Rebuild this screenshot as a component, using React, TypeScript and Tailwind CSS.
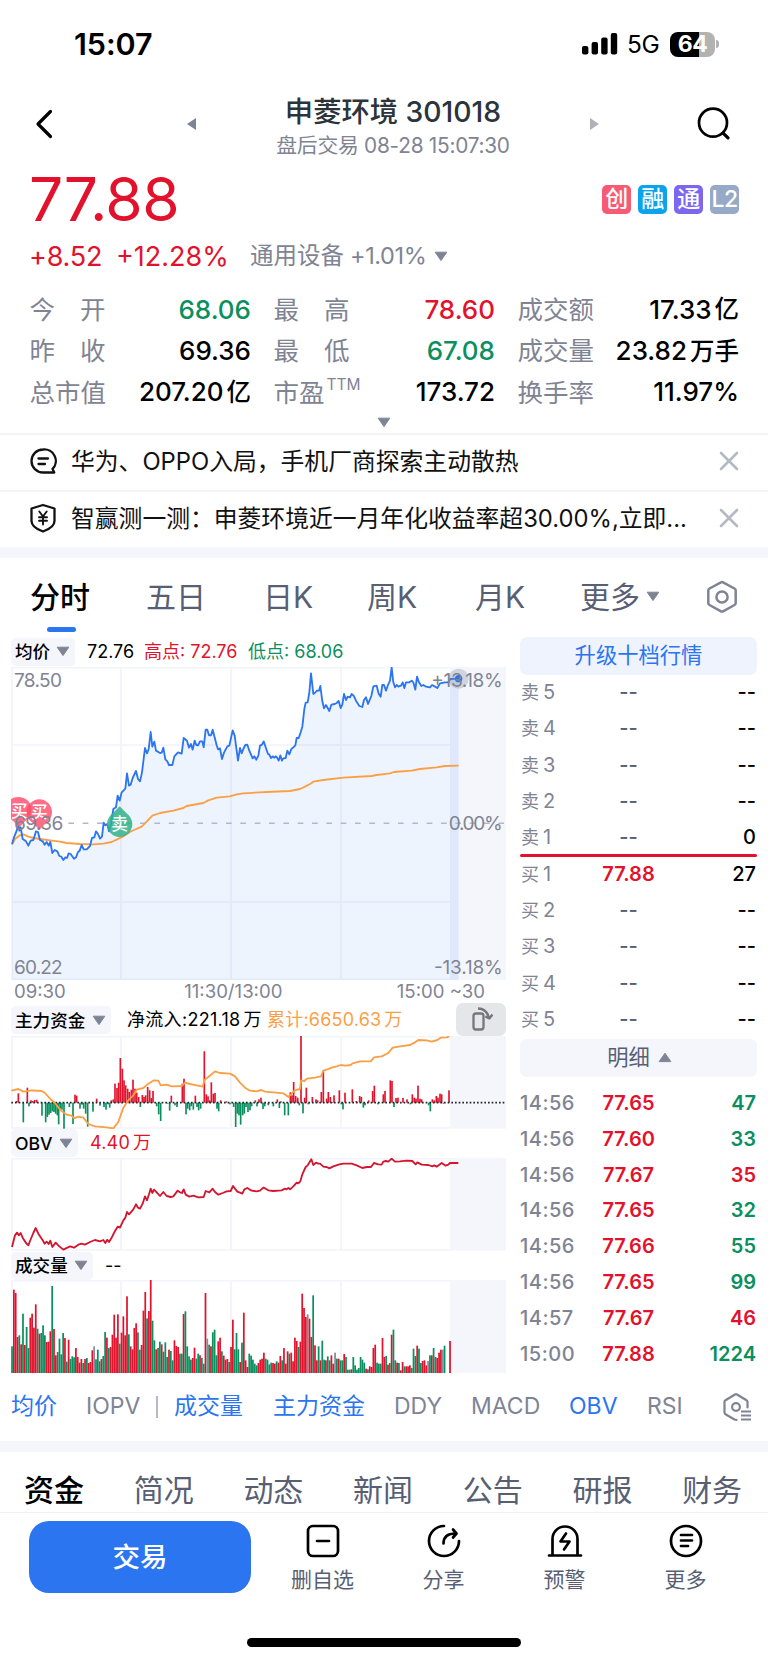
import React from "react";

const RED = "#e2122c";
const GREEN = "#0a8f5f";
const GREY = "#7f8494";

type Point = [number, number];

const parse = (s: string): Point[] =>
  s.trim().split(/\s+/).map((p) => p.split(",").map(Number) as Point);

const PRICE = "36,640 42,620 50,600 55,585 58,600 62,590 68,625 78,632 85,645 92,630 100,628 108,602 114,604 120,628 128,632 134,642 140,634 146,645 151,634 157,667 164,658 172,662 178,676 184,678 190,688 196,680 201,682 206,668 212,670 222,684 228,680 234,664 239,660 245,643 251,656 260,656 270,646 276,622 283,620 288,602 294,610 300,624 306,618 311,576 316,584 322,580 327,602 333,580 340,535 348,530 353,495 359,510 365,485 376,474 381,428 387,465 392,462 398,442 408,421 414,445 420,452 426,425 435,352 441,368 446,355 452,304 457,348 463,333 468,360 480,367 485,366 490,351 496,386 502,392 507,403 517,403 523,377 534,365 545,369 551,322 561,330 567,351 573,340 578,357 584,330 589,343 594,344 600,332 607,332 611,350 617,297 622,297 627,314 633,314 638,297 650,344 654,356 660,353 666,385 672,366 682,347 688,345 698,299 704,315 714,390 720,352 725,368 730,355 736,343 742,342 748,360 758,383 763,377 769,387 775,375 780,345 786,342 791,332 797,350 804,370 808,372 813,382 818,377 823,381 828,377 832,382 836,390 841,374 846,390 850,383 857,382 862,360 868,371 874,355 880,350 886,344 890,322 896,322 902,305 907,288 913,235 917,216 923,215 928,185 933,128 940,190 946,185 951,180 957,180 961,166 967,212 972,233 978,223 988,241 994,222 1004,220 1010,217 1016,211 1022,232 1027,222 1032,190 1038,208 1043,198 1050,200 1055,190 1061,195 1068,210 1078,226 1087,229 1092,208 1098,200 1104,220 1114,196 1120,167 1130,165 1136,189 1142,198 1147,163 1152,163 1158,180 1163,165 1170,150 1175,111 1180,155 1185,170 1190,163 1195,168 1203,165 1208,155 1213,172 1218,155 1228,155 1235,150 1240,155 1246,177 1251,138 1257,155 1264,166 1270,163 1278,168 1290,170 1296,163 1305,168 1312,172 1320,158 1335,155 1345,155 1351,145 1370,144 1376,144";

const AVERAGE = "36,642 45,625 58,615 70,611 85,618 100,622 120,625 150,629 180,633 200,637 240,640 280,641 310,639 335,634 350,627 370,617 395,601 425,588 440,573 457,555 480,547 520,540 550,532 560,526 610,517 625,509 650,501 690,497 710,491 730,488 780,485 800,484 870,481 900,475 915,468 930,460 940,453 970,448 1030,441 1115,436 1130,433 1170,428 1182,424 1235,420 1260,415 1310,410 1335,406 1376,405";

const FUND_LINE = "34,271 55,266 70,274 95,270 125,272 135,278 155,300 165,308 180,328 200,343 215,346 222,354 235,349 250,352 265,371 285,378 320,381 340,384 355,365 370,322 385,300 400,285 410,268 430,263 445,250 462,240 475,241 482,255 500,253 515,258 545,257 555,247 570,251 590,255 608,259 614,238 625,230 645,213 660,218 690,220 705,228 720,247 735,262 750,271 770,273 783,269 795,274 820,276 850,279 865,290 873,282 884,270 900,266 903,240 913,242 921,235 945,232 963,228 970,211 982,207 995,202 1010,198 1022,194 1035,196 1052,194 1058,189 1080,183 1112,183 1122,171 1145,168 1165,158 1178,142 1200,138 1230,134 1245,126 1255,119 1280,120 1295,124 1312,119 1322,112 1340,111 1348,108";

const FUND_BARS = "50,302 55,279 70,366 82,262 87,318 93,300 98,302 104,299 110,298 126,346 137,366 142,350 147,343 152,338 157,333 162,335 167,340 172,345 176,372 181,325 186,328 192,385 208,320 219,371 225,283 230,286 240,325 246,313 251,325 257,340 263,379 279,334 290,295 300,316 312,320 318,328 324,312 329,322 334,300 340,297 345,250 351,263 356,247 361,173 367,205 372,240 377,255 383,265 388,275 394,268 399,238 405,265 410,277 416,290 421,320 427,284 432,290 437,285 443,260 449,270 454,293 459,272 470,318 476,342 482,362 503,310 509,331 514,286 525,315 531,320 547,250 552,235 558,342 563,325 569,330 574,318 580,328 586,286 591,320 596,330 602,325 613,153 619,282 624,288 629,300 634,246 640,280 645,278 651,325 656,333 662,300 679,303 690,312 701,320 707,380 712,340 717,345 722,373 728,345 733,340 738,320 744,335 750,330 755,318 766,300 771,318 777,297 783,292 789,326 794,318 805,315 820,318 832,297 838,323 843,303 854,345 865,345 871,276 876,285 881,245 887,287 893,292 898,315 903,107 909,339 914,292 919,262 925,312 937,290 948,297 953,300 964,275 970,211 980,295 985,275 991,290 997,305 1002,285 1018,270 1024,312 1029,327 1035,277 1057,267 1069,302 1079,287 1084,290 1090,322 1095,315 1106,300 1118,272 1123,256 1134,312 1150,282 1155,272 1171,240 1176,242 1182,320 1188,293 1194,292 1209,293 1221,297 1231,312 1237,282 1243,292 1248,295 1254,256 1260,295 1265,297 1286,315 1291,333 1297,297 1303,300 1309,287 1314,292 1320,280 1325,282 1330,310 1347,270";

const OBV = "36,740 45,705 51,697 57,705 62,698 68,712 78,728 85,735 90,722 100,698 107,683 115,700 128,720 134,730 140,724 146,731 151,721 157,740 167,727 178,738 190,748 210,738 222,742 235,733 245,730 255,733 270,725 285,719 300,723 310,719 316,728 322,718 327,725 335,712 345,692 353,679 360,682 370,660 376,652 381,635 387,642 400,627 408,612 414,622 420,625 428,610 435,588 441,600 447,582 452,565 457,578 462,568 470,576 480,587 490,575 500,587 512,590 520,588 533,571 540,576 546,578 551,567 557,583 568,589 580,586 595,591 611,590 617,572 628,576 638,565 645,575 655,583 668,578 680,573 692,572 699,557 712,574 720,577 727,580 733,567 742,563 755,571 770,573 780,571 790,562 797,565 805,570 820,572 845,570 855,565 860,567 865,563 870,567 880,558 890,547 895,549 901,543 907,522 917,500 923,495 934,477 940,494 948,487 955,490 960,490 970,499 980,500 988,504 1000,498 1018,492 1030,490 1055,490 1070,495 1087,503 1100,500 1113,500 1122,488 1135,492 1145,493 1150,484 1158,482 1165,484 1175,475 1185,484 1200,483 1220,481 1237,482 1247,492 1252,486 1265,493 1285,494 1297,498 1303,495 1310,499 1325,488 1337,496 1345,493 1350,488 1375,488";

const VOLUME = "g1038 r868 r878 r1010 g1005 r1032 g940 r1034 g980 g1043 r952 r940 r982 r912 g985 r1000 g998 g975 g1005 r1025 r1024 r993 g857 r986 r1065 g1055 g1015 g1062 g998 r1013 g1084 r1018 g1076 g1068 g1071 r1043 r1070 r1087 r1076 g1088 r1076 g1073 r1088 r1085 r1050 n1038 g1077 g1048 g1083 r1076 g1067 g995 r1012 g1043 r1040 r1003 r943 r1012 r942 g1030 r997 r948 r1005 r888 g1002 r1038 r1047 r983 r969 g996 g1048 r1034 r931 r875 g954 r932 r839 g961 g1020 r1047 g1043 g1024 r1032 g1054 g1026 g1070 r1048 g1052 g1080 r1020 r1037 r1040 g1060 g1060 r941 g933 g1038 g1068 g1078 r1073 r1042 g1075 g1060 r1065 g1073 g1090 r878 n1015 g1033 r1038 g996 g988 g1065 r1023 r1012 g1053 r1066 r1078 r1076 g1085 r1040 r958 g1047 g998 g1047 r1085 g1027 r937 r1080 r1100 g1060 g1066 g1078 g1090 g1095 r1088 r1078 r1075 r1057 g1075 g1078 g1092 g1087 r1088 r1090 g1083 r1087 r1067 g1080 r1043 r1090 r1053 g1060 r1057 r1083 r1012 r1022 g1040 r1024 r880 r923 r950 n942 r955 r1010 g885 r1035 r1080 g1038 r1080 g1021 g1078 r1080 g1068 g1080 r1065 r1090 n1057 g1075 r1075 g1080 g1080 r1061 g1070 g1108 g1108 r1107 g1070 g1095 g1108 g1103 g1070 g1078 g1087 r1105 g1107 r1098 r1100 r1043 r1033 g1087 g1090 g1090 r1013 r1070 g1067 r1093 g1088 r1003 g988 g1080 r1087 g1088 r1110 r1085 g1098 r1098 r1098 r1095 g1103 g1045 g1067 r1036 g1045 g1088 r1082 r1080 r1095 n1082 g1065 r1065 g1043 g1070 r1073 r1057 r1048 n1048 g1036 g1118 g1118 r1022";

const TONES: Record<string, string> = { r: RED, g: GREEN, n: "#868a99" };

function Down({ className = "text-[#7f8494]", flip = false }: { className?: string; flip?: boolean }) {
  return (
    <svg width="14" height="11" viewBox="0 0 14 11" className={"shrink-0 " + className}>
      <path
        d={flip ? "M7 1.2 12.8 9.6H1.2Z" : "M1.2 1.2h11.6L7 9.6Z"}
        fill="currentColor"
        stroke="currentColor"
        strokeLinejoin="round"
      />
    </svg>
  );
}

function StatusBar() {
  return (
    <div className="flex h-[88px] items-center justify-between pl-[74px] pr-[49px]">
      <span className="text-[30.5px] font-semibold leading-none tracking-[-0.1px] text-black">15:07</span>
      <div className="flex items-center">
        <svg width="36" height="22" viewBox="0 0 36 22">
          <rect x="0" y="13" width="6.4" height="8.5" rx="2" />
          <rect x="9.6" y="9" width="6.4" height="12.5" rx="2" />
          <rect x="19.2" y="4.5" width="6.4" height="17" rx="2" />
          <rect x="28.8" y="0" width="6.4" height="21.5" rx="2" />
        </svg>
        <span className="ml-[9px] w-[43px] text-[24.5px] leading-none tracking-[-0.5px] text-black">5G</span>
        <div className="flex h-[25px] w-[45px] items-center justify-center rounded-[8px] bg-[linear-gradient(90deg,#000_64%,#b2b2b2_64%)]">
          <span className="text-[23px] font-bold leading-none tracking-[-0.5px] text-white">64</span>
        </div>
        <div className="ml-[1px] h-[8px] w-[3px] rounded-r-[3px] bg-[#b2b2b2]" />
      </div>
    </div>
  );
}

function Header() {
  return (
    <div className="flex h-[72px] items-center">
      <svg className="ml-[34px]" width="20" height="30" viewBox="0 0 20 30" fill="none" stroke="#000" strokeWidth="3.2" strokeLinecap="round" strokeLinejoin="round">
        <path d="M16.5 2.5 4 15l12.5 12.5" />
      </svg>
      <svg className="ml-[133px]" width="10" height="14" viewBox="0 0 10 14"><path d="M9 1v12L0 7Z" fill={GREY} /></svg>
      <div className="w-[392px] pt-[10px] text-center">
        <div className="h-[34px] text-[28.3px] font-medium leading-[34px] text-[#2b333b]">
          申菱环境 <span>301018</span>
        </div>
        <div className="h-[34px] text-[20.8px] leading-[34px] tracking-[-0.25px] text-[#7f8494]">盘后交易 08-28 15:07:30</div>
      </div>
      <svg width="10" height="14" viewBox="0 0 10 14"><path d="M1 1v12l9-6Z" fill="#b0b2b8" /></svg>
      <svg className="ml-[97px]" width="35" height="34" viewBox="0 0 35 34" fill="none" stroke="#000" strokeLinecap="round">
        <circle cx="17" cy="15.700" r="14" strokeWidth="2.700" />
        <path d="m27 26 5 4.800" strokeWidth="3.200" />
      </svg>
    </div>
  );
}

const BADGES: [string, string][] = [
  ["创", "bg-[#f65a74]"],
  ["融", "bg-[#0aa3ec]"],
  ["通", "bg-[#7b68ee]"],
  ["L2", "bg-[#96a9c6]"],
];

function Quote() {
  return (
    <div className="pl-[29px]">
      <div className="flex h-[79px] items-center justify-between pr-[29px]">
        <span className="text-[60.5px] leading-none tracking-[-0.6px] text-[#e2122c]">77.88</span>
        <div className="flex gap-[7px]">
          {BADGES.map(([label, tone]) => (
            <span key={label} className={"flex h-[29px] w-[29px] items-center justify-center rounded-[5px] text-[23px] font-medium leading-none tracking-[-0.5px] text-white " + tone}>
              {label}
            </span>
          ))}
        </div>
      </div>
      <div className="flex h-[34px] items-center leading-none">
        <span className="w-[87px] text-[27px] tracking-[-0.2px] text-[#e2122c]">+8.52</span>
        <span className="w-[134px] text-[27px] text-[#e2122c]">+12.28%</span>
        <span className="text-[23.5px] text-[#7f8494]">通用设备</span>
        <span className="ml-[6px] mr-[8px] text-[23.5px] tracking-[-0.4px] text-[#7f8494]">+1.01%</span>
        <Down />
      </div>
    </div>
  );
}

type Stat = { a: string; b?: string; sup?: string; v: string; unit?: string; tone: string };

const STATS: Stat[][] = [
  [
    { a: "今", b: "开", v: "68.06", tone: "text-[#0a8f5f]" },
    { a: "最", b: "高", v: "78.60", tone: "text-[#e2122c]" },
    { a: "成交额", v: "17.33", unit: "亿", tone: "text-black" },
  ],
  [
    { a: "昨", b: "收", v: "69.36", tone: "text-black" },
    { a: "最", b: "低", v: "67.08", tone: "text-[#0a8f5f]" },
    { a: "成交量", v: "23.82", unit: "万手", tone: "text-black" },
  ],
  [
    { a: "总市值", v: "207.20", unit: "亿", tone: "text-black" },
    { a: "市盈", sup: "TTM", v: "173.72", tone: "text-black" },
    { a: "换手率", v: "11.97%", tone: "text-black" },
  ],
];

function Stats() {
  return (
    <div className="mt-[16px]">
      {STATS.map((row, i) => (
        <div key={i} className="grid h-[41.33px] grid-cols-[221.5px_221.5px_221.5px] items-center gap-x-[22.5px] pl-[29.5px] leading-none">
          {row.map((s) => (
            <div key={s.a + s.v} className="flex items-center justify-between">
              <span className="flex text-[25.5px] text-[#7f8494]">
                {s.a}
                {s.b && <span className="ml-[25px]">{s.b}</span>}
                {s.sup && <span className="-mt-[3px] ml-[2px] text-[15.5px]">{s.sup}</span>}
              </span>
              <span className={"flex items-center gap-[3px] text-[26px] font-medium " + s.tone}>
                {s.v}
                {s.unit && <span className="text-[24.5px]">{s.unit}</span>}
              </span>
            </div>
          ))}
        </div>
      ))}
      <div className="flex h-[20px] items-center justify-center"><Down /></div>
    </div>
  );
}

function News({ icon, text }: { icon: React.ReactNode; text: string }) {
  return (
    <div className="flex h-[57px] items-center border-t-2 border-[#f2f4fa] pb-[2px] pl-[29px] pr-[29px]">
      <span className="w-[42px]">{icon}</span>
      <span className="grow whitespace-nowrap text-[23.8px] leading-none text-[#111]">{text}</span>
      <svg width="20" height="20" viewBox="0 0 20 20" stroke="#b3b9c6" strokeWidth="2.6" strokeLinecap="round">
        <path d="m2 2 16 16M18 2 2 18" />
      </svg>
    </div>
  );
}

const commentIcon = (
  <svg width="28" height="28" viewBox="0 0 28 28" fill="none" stroke="#111" strokeWidth="2.3" strokeLinecap="round" strokeLinejoin="round">
    <path d="M14 2.500a11.500 11.500 0 1 0 0 23h11.300l-1.800-3.500A11.500 11.500 0 0 0 14 2.500Z" />
    <path d="M9.500 11.500h9.500M9.500 17h6.500" />
  </svg>
);

const shieldIcon = (
  <svg width="28" height="30" viewBox="0 0 28 30" fill="none" stroke="#111" strokeWidth="2.3" strokeLinecap="round" strokeLinejoin="round">
    <path d="M14 2 25.500 5.500v12.500c0 4.500-4.500 8-11.500 10.500C7 26 2.500 22.500 2.500 18V5.500Z" />
    <path d="m10.300 8.500 3.700 5 3.700-5M14 13.500v8M10 14.200h8M10 17.800h8" strokeWidth="1.900" />
  </svg>
);

function Hexagon({ list = false }: { list?: boolean }) {
  return list ? (
    <svg width="31" height="30" viewBox="0 0 31 30" fill="none" stroke="#7f8494" strokeWidth="2.2" strokeLinecap="round" strokeLinejoin="round">
      <path d="M14.500 28 12.500 27.500 3.500 22.300a2 2 0 0 1-1-1.700V10a2 2 0 0 1 1-1.700l9.500-5.800a2 2 0 0 1 2 0l9.500 5.800a2 2 0 0 1 1 1.700V15.500" />
      <circle cx="14" cy="15" r="3.900" />
      <path d="M19 19.500h10M19 23.500h10M19 27.500h10" strokeLinecap="butt" strokeWidth="2" />
    </svg>
  ) : (
    <svg width="32" height="34" viewBox="0 0 32 34" fill="none" stroke="#7f8494" strokeWidth="2.500" strokeLinejoin="round">
      <path d="m17 2.300 11.500 6.200a2.200 2.200 0 0 1 1.200 2v12.500a2.200 2.200 0 0 1-1.200 2L17 31.300a2.200 2.200 0 0 1-2 0L3.500 25a2.200 2.200 0 0 1-1.200-2V10.500a2.200 2.200 0 0 1 1.200-2L15 2.300a2.200 2.200 0 0 1 2 0Z" />
      <circle cx="16" cy="17" r="5.600" />
    </svg>
  );
}

function Periods() {
  return (
    <div className="flex h-[78px] items-center pl-[30px] text-[30px] leading-none text-[#585f74]">
      <div className="relative flex h-full w-[116px] items-center font-medium text-black">
        分时
        <span className="absolute left-[17px] top-[69px] h-[5px] w-[29px] rounded-full bg-[#2b75f0]" />
      </div>
      <span className="w-[117px]">五日</span>
      <span className="w-[104px]">日K</span>
      <span className="w-[108px]">周K</span>
      <span className="w-[105px]">月K</span>
      <span className="w-[66px]">更多</span>
      <Down />
      <span className="ml-[46px]"><Hexagon /></span>
    </div>
  );
}

function Pill({ label, width }: { label: string; width: string }) {
  return (
    <span className={"flex h-[28px] shrink-0 items-center justify-between rounded-[5px] bg-[#f4f6fb] pl-[4px] pr-[5px] text-[17.600px] font-medium leading-none text-black " + width}>
      {label}
      <Down />
    </span>
  );
}

function Grid({ top, bottom }: { top: number; bottom: number }) {
  return (
    <g fill="none" stroke="#f1f4fb" strokeWidth="5">
      <path d={`M36 ${top + 2}H1351M36 ${bottom - 2}H1351M36 ${top}V${bottom}M363 ${top}V${bottom}M693 ${top}V${bottom}M1023 ${top}V${bottom}`} />
      <rect x="1350" y={top} width="168" height={bottom - top} fill="#f4f6fb" stroke="none" />
    </g>
  );
}

function PriceChart() {
  return (
    <svg className="block" width="495" height="313" viewBox="33 109 1485 939" fontFamily="Inter" fontSize="57" fill={GREY}>
      <Grid top={109} bottom={1048} />
      <path d="M36 343H1350M36 814H1350" stroke="#f1f4fb" strokeWidth="5" />
      <path d={`M36 1048 L${PRICE} L1376 1048Z`} fill="#2b75f0" fillOpacity="0.08" />
      <rect x="1350" y="144" width="26" height="904" fill="#2b75f0" fillOpacity="0.02" />
      <path d="M205 578H1518" stroke="#b1b7d0" strokeWidth="4.500" strokeDasharray="17 26" />
      <polyline points={AVERAGE} fill="none" stroke="#fb9f45" strokeWidth="5.500" strokeLinejoin="round" />
      <polyline points={PRICE} fill="none" stroke="#2b75f0" strokeWidth="5.500" strokeLinejoin="round" />
      <g fill="#ff4a68" fillOpacity="0.8">
        <path d="M33 506C45 495 70 497 84 510C100 528 96 554 78 569L58 590L37 569L33 565Z" />
        <path d="M118 506C138 506 156 523 156 544C156 561 148 570 138 577L118 597L98 577C88 570 80 561 80 544C80 523 98 506 118 506Z" />
      </g>
      <path d="M359 527L379 547C390 556 397 567 397 580C397 602 380 619 359 619C338 619 321 602 321 580C321 567 328 556 339 547Z" fill="#31b187" fillOpacity="0.85" />
      <g fill="#fff" fontFamily="Noto Sans CJK SC" fontWeight="500" fontSize="50" textAnchor="middle">
        <text x="58" y="558">买</text>
        <text x="118" y="561">买</text>
        <text x="359" y="597">卖</text>
      </g>
      <circle cx="1376" cy="144" r="30" fill="#7f8494" fillOpacity="0.3" />
      <circle cx="1376" cy="144" r="11" fill="#2b75f0" />
      <text x="42" y="170" textLength="144">78.50</text>
      <text x="42" y="597" textLength="148">69.36</text>
      <text x="42" y="1031" textLength="146">60.22</text>
      <g textAnchor="end">
        <text x="1508" y="170" textLength="214">+13.18%</text>
        <text x="1508" y="597" textLength="162">0.00%</text>
        <text x="1508" y="1031" textLength="206">-13.18%</text>
      </g>
    </svg>
  );
}

function FundChart() {
  return (
    <svg className="block" width="495" height="93" viewBox="33 107 1485 279">
      <Grid top={107} bottom={385} />
      {parse(FUND_BARS).map(([x, y]) => (
        <rect key={x} x={x - 2.500} width="5" y={Math.min(y, 307)} height={Math.abs(y - 307)} fill={y < 307 ? RED : GREEN} />
      ))}
      <path d="M34 307H1518" stroke="#23262e" strokeWidth="5" strokeDasharray="5 6" />
      <polyline points={FUND_LINE} fill="none" stroke="#fb9f45" strokeWidth="5.500" strokeLinejoin="round" />
    </svg>
  );
}

function ObvChart() {
  return (
    <svg className="block" width="495" height="93" viewBox="33 473 1485 279">
      <Grid top={473} bottom={751} />
      <polyline points={OBV} fill="none" stroke="#d3152f" strokeWidth="5.500" strokeLinejoin="round" />
    </svg>
  );
}

function VolumeChart() {
  return (
    <svg className="block" width="495" height="93" viewBox="33 839 1485 279">
      <Grid top={839} bottom={1122} />
      {VOLUME.split(" ").map((bar, i) => {
        const y = Number(bar.slice(1));
        return <rect key={i} x={33.500 + i * 5.475} width="5.200" y={y} height={1118 - y} fill={TONES[bar[0]]} />;
      })}
    </svg>
  );
}

function Charts() {
  return (
    <div className="w-[495px] text-[18px] leading-none">
      <div className="flex h-[31px] items-center pt-[1px]">
        <Pill label="均价" width="w-[64px]" />
        <span className="ml-[12px] w-[57px] text-black">72.76</span>
        <span className="w-[104px] text-[#e2122c]">高点: 72.76</span>
        <span className="text-[#0a8f5f]">低点: 68.06</span>
      </div>
      <PriceChart />
      <div className="flex h-[23px] items-center justify-between pl-[3px] pr-[21px] text-[18.600px] text-[#7f8494]">
        <span>09:30</span>
        <span className="ml-[4px]">11:30/13:00</span>
        <span>15:00 ~30</span>
      </div>
      <div className="flex h-[33px] items-center pt-[2px]">
        <Pill label="主力资金" width="w-[100px]" />
        <span className="ml-[16px] w-[140px] whitespace-nowrap tracking-[0.300px] text-black">净流入:221.18<span className="ml-[3px]">万</span></span>
        <span className="whitespace-nowrap tracking-[0.200px] text-[#fb9f45]">累计:6650.63<span className="ml-[3px]">万</span></span>
        <span className="-mt-[2px] ml-auto flex h-[33px] w-[50px] items-center justify-center rounded-[7px] bg-[#e5e6ea]">
          <svg width="24" height="26" viewBox="0 0 24 26" fill="none" stroke="#75767b" strokeWidth="2.300" strokeLinejoin="round">
            <rect x="4.500" y="7.500" width="10" height="16" rx="2.500" />
            <path d="M9 2.500c5 0 9 2.500 11 9M16.300 10.500l4 2 3.200-4" />
          </svg>
        </span>
      </div>
      <FundChart />
      <div className="flex h-[29px] items-center">
        <Pill label="OBV" width="w-[67px]" />
        <span className="ml-[12px] tracking-[0.200px] text-[#e2122c]">4.40<span className="ml-[3px]">万</span></span>
      </div>
      <ObvChart />
      <div className="flex h-[29px] items-center pt-[1px]">
        <Pill label="成交量" width="w-[82px]" />
        <span className="ml-[12px] text-black">--</span>
      </div>
      <VolumeChart />
    </div>
  );
}

function Level({ side, n, price = "--", vol = "--" }: { side: string; n: number; price?: string; vol?: string }) {
  return (
    <div className="flex h-[36.300px] items-center text-[20px]">
      <span className="w-[61px] pl-[1px] text-[#7f8494]">
        <span className="text-[18px]">{side}</span>
        <span className="ml-[4px]">{n}</span>
      </span>
      <span className={"w-[95px] text-center " + (price === "--" ? "font-medium text-[#585f74]" : "font-semibold text-[#e2122c]")}>{price}</span>
      <span className="grow text-right font-medium text-black">{vol}</span>
    </div>
  );
}

const TRADES: [string, string, string, boolean][] = [
  ["14:56", "77.65", "47", false],
  ["14:56", "77.60", "33", false],
  ["14:56", "77.67", "35", true],
  ["14:56", "77.65", "32", false],
  ["14:56", "77.66", "55", false],
  ["14:56", "77.65", "99", false],
  ["14:57", "77.67", "46", true],
  ["15:00", "77.88", "1224", false],
];

function OrderBook() {
  return (
    <div className="ml-[14px] w-[237px] pt-[1px] leading-none">
      <div className="flex h-[38px] items-center justify-center rounded-[7px] bg-[#eef3fe] text-[21.300px] text-[#2b75f0]">升级十档行情</div>
      <div className="-mt-[1px] pr-[1px]">
        {[5, 4, 3, 2, 1].map((n) => (
          <Level key={n} side="卖" n={n} vol={n === 1 ? "0" : "--"} />
        ))}
        <div className="-mb-[2px] -mt-[1px] h-[3px] w-[237px] rounded-full bg-[#e2122c]" />
        <Level side="买" n={1} price="77.88" vol="27" />
        {[2, 3, 4, 5].map((n) => (
          <Level key={n} side="买" n={n} />
        ))}
      </div>
      <div className="mt-[2px] flex h-[38px] items-center justify-center gap-[8px] rounded-[7px] bg-[#f4f6fb] pl-[2px] text-[21.300px] text-[#585f74]">
        明细
        <Down flip />
      </div>
      <div className="pr-[1px] pt-[8px]">
        {TRADES.map(([time, price, vol, up], i) => (
          <div key={i} className="flex h-[35.850px] items-center text-[20px] font-medium">
            <span className="w-[61px] tracking-[0.500px] text-[#7f8494]">{time}</span>
            <span className="w-[95px] text-center font-semibold text-[#e2122c]">{price}</span>
            <span className={"grow text-right font-semibold " + (up ? "text-[#e2122c]" : "text-[#0a8f5f]")}>{vol}</span>
          </div>
        ))}
      </div>
    </div>
  );
}

function Indicators() {
  return (
    <div className="flex h-[68px] items-center pl-[11px] text-[23px] leading-none text-[#7f8494]">
      <span className="w-[75px] text-[#2b75f0]">均价</span>
      <span className="w-[70px]">IOPV</span>
      <span className="mr-[16px] h-[22px] w-[2px] bg-[#b3b9c6]" />
      <span className="w-[99px] text-[#2b75f0]">成交量</span>
      <span className="w-[121px] text-[#2b75f0]">主力资金</span>
      <span className="w-[77px]">DDY</span>
      <span className="w-[98px]">MACD</span>
      <span className="w-[78px] text-[#2b75f0]">OBV</span>
      <span className="w-[75px]">RSI</span>
      <Hexagon list />
    </div>
  );
}

function BottomAction({ label, children }: { label: string; children: React.ReactNode }) {
  return (
    <div className="flex w-[121px] flex-col items-center text-[21px] leading-none text-[#585f74]">
      <svg width="38" height="38" viewBox="0 0 38 38" fill="none" stroke="#000" strokeWidth="2.700" strokeLinecap="round" strokeLinejoin="round">
        {children}
      </svg>
      <span className="mt-[10px]">{label}</span>
    </div>
  );
}

export default function App() {
  return (
    <div className="h-[1662px] w-[768px] overflow-hidden bg-white font-['Inter','Noto_Sans_CJK_SC',sans-serif]">
      <StatusBar />
      <Header />
      <Quote />
      <Stats />
      <News icon={commentIcon} text="华为、OPPO入局，手机厂商探索主动散热" />
      <News icon={shieldIcon} text="智赢测一测：申菱环境近一月年化收益率超30.00%,立即..." />
      <div className="h-[11px] bg-[#f4f6fb]" />
      <Periods />
      <div className="flex h-[737px] pl-[11px]">
        <Charts />
        <OrderBook />
      </div>
      <Indicators />
      <div className="h-[11px] bg-[#f4f6fb]" />
      <div className="flex h-[61px] items-center border-b border-[#eef0f5] pl-[24px] pt-[16px] text-[30px] leading-none text-[#585f74]">
        <span className="w-[109.700px] shrink-0 font-medium text-black">资金</span>
        {["简况", "动态", "新闻", "公告", "研报", "财务"].map((t) => (
          <span key={t} className="w-[109.700px] shrink-0">{t}</span>
        ))}
      </div>
      <div className="flex h-[125px] items-start pl-[29px] pt-[8px]">
        <button className="mr-[11px] h-[72px] w-[222px] rounded-[20px] bg-[#2b75f0] pt-[2px] text-[27.500px] font-medium leading-none text-white">交易</button>
        <BottomAction label="删自选">
          <rect x="4" y="5" width="30" height="30" rx="5" />
          <path d="M13 20h12" />
        </BottomAction>
        <BottomAction label="分享">
          <path d="M19 5A15 15 0 1 0 34 20" />
          <path d="M18.500 22.500c0-6.500 3.500-10 12-10M28 8.500l3.500 4-3.500 4" />
        </BottomAction>
        <BottomAction label="预警">
          <path d="M3 34.500h32M6.500 34.500V18a12.500 12.500 0 0 1 25 0v16.500" />
          <path d="m20 12.500-5.500 8h9l-5.500 8" />
        </BottomAction>
        <BottomAction label="更多">
          <circle cx="19" cy="20" r="15" />
          <path d="M14 14h11M14 19.500h11M14 25h7" />
        </BottomAction>
      </div>
      <div className="mx-auto h-[9px] w-[274px] rounded-full bg-black" />
    </div>
  );
}
